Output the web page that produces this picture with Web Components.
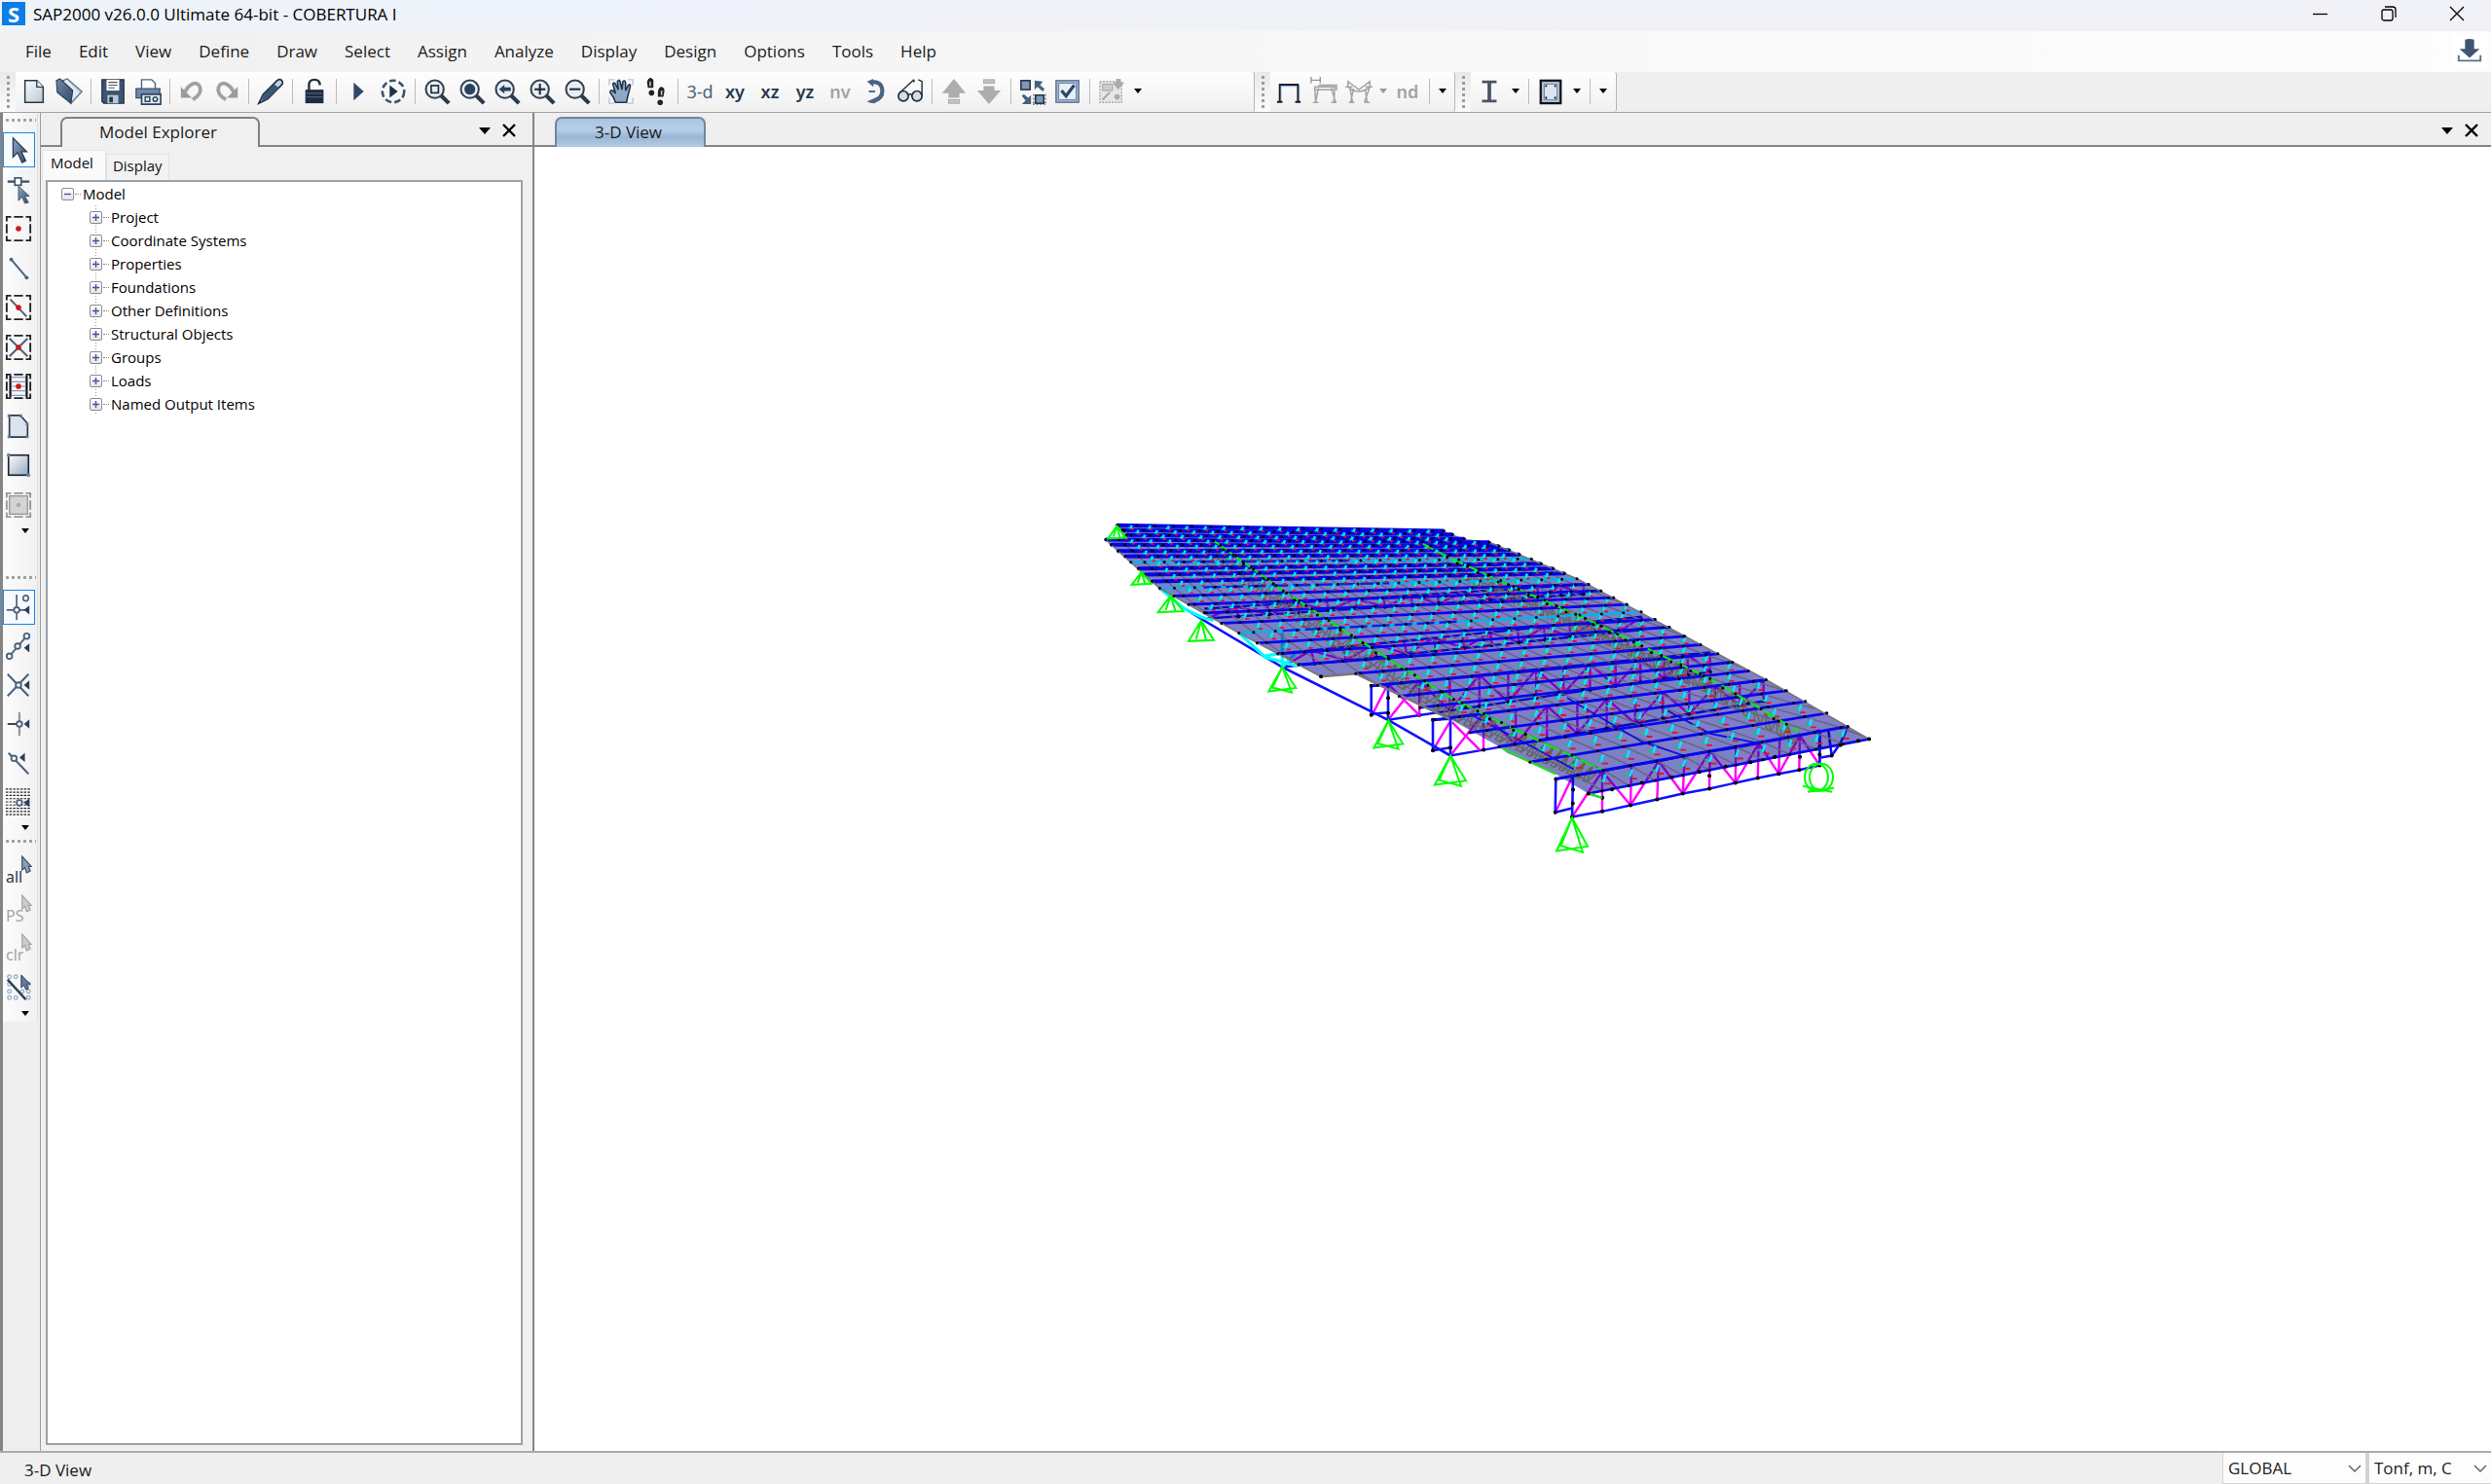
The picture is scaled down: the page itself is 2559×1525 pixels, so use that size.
<!DOCTYPE html>
<html lang="en">
<head>
<meta charset="utf-8">
<title>SAP2000 v26.0.0 Ultimate 64-bit - COBERTURA I</title>
<style>
  html, body { margin: 0; height: 100%; }
  body { font: 17px/24px "Open Sans", "Noto Sans", sans-serif; color: #1a1a1a; background: #efefef; overflow: hidden; }
</style>
</head>
<body>
<sap-window></sap-window>
<script>
const ICONS = {
  new: '<path d="M4 2H17L24 9V26H4Z" fill="url(#p)" stroke="#2d3845" stroke-width="1.6"/><path d="M17 2V9H24" fill="#eef3f6" stroke="#2d3845" stroke-width="1.4"/>',
  open: '<path d="M7 2L12 0L28 14L16 27L12 12Z" fill="#e4ebf3" stroke="#54708f" stroke-width="1.4"/><path d="M14 3L26 15" stroke="#9db2cb"/><path d="M0 2L4 0L18 13L16 27L1 15Z" fill="url(#b3)" stroke="#2b3d55" stroke-width="1.2"/>',
  save: '<path d="M2 1H26V27H4L2 25Z" fill="#3c546f" stroke="#223247" stroke-width="1.4"/><path d="M7 1H21V13H7Z" fill="#fff"/><path d="M9 4H19M9 7H19M9 10H16" stroke="#555" stroke-width="1.2"/><path d="M8 18H20V27H8Z" fill="#b9c7d8"/><path d="M10 20H14V26H10Z" fill="#26394f"/>',
  print: '<path d="M7 1H18L22 5V13H7Z" fill="#fff" stroke="#4a6483" stroke-width="1.5"/><path d="M1 11H27V21H1Z" fill="#6d88a8" stroke="#34506f" stroke-width="1.4"/><path d="M7 17H28V28H7Z" fill="#e6edf5" stroke="#2d4560" stroke-width="1.8"/><rect x="11" y="20" width="5" height="5" fill="none" stroke="#2d4560" stroke-width="1.6"/><circle cx="22" cy="22.500" r="2.400" fill="none" stroke="#2d4560" stroke-width="1.6"/>',
  undo: '<path d="M2 9V21H14Z" fill="#9a9a9a"/><path d="M6 16C10 6 20 1 23 9C25 15 20 20 15 23" fill="none" stroke="#a0a0a0" stroke-width="4"/>',
  redo: '<path d="M26 9V21H14Z" fill="#9a9a9a"/><path d="M22 16C18 6 8 1 5 9C3 15 8 20 13 23" fill="none" stroke="#a0a0a0" stroke-width="4"/>',
  pencil: '<path d="M1 27L6 17L21 2Q25 -1 27 3Q28 5 26 7L11 22Z" fill="#c5d0de" stroke="#1f2f44" stroke-width="1.8"/><path d="M6 18L18 6L23 10L11 22L4 25Z" fill="#3c5676"/>',
  lock: '<path d="M8 13V7Q8 1 14 1Q20 1 20 7" fill="none" stroke="#26303c" stroke-width="2.600"/><rect x="4" y="12" width="20" height="15" fill="#1c2b40"/><path d="M5 16H23M5 20H23" stroke="#46607f" stroke-width="1.500"/>',
  run: '<path d="M9 4L20 14L9 24Z" fill="#2f4966"/>',
  runall: '<circle cx="14" cy="14" r="12" fill="none" stroke="#3a516d" stroke-width="2.800" stroke-dasharray="7 3.400"/><path d="M10 7L19 14L10 21Z" fill="#1f3148"/>',
  zrect: 'Z<rect x="7.500" y="7.500" width="8" height="8" fill="none" stroke="#222f3f" stroke-width="1.800"/>',
  zfull: 'Z<circle cx="11.500" cy="11.500" r="6" fill="#2b405b"/>',
  zprev: 'Z<path d="M5 11.500L11 6.500V9.500H18V13.500H11V16.500Z" fill="#2b405b"/>',
  zin: 'Z<path d="M5.500 11.500H17.500M11.500 5.500V17.500" stroke="#1b2735" stroke-width="2.200"/>',
  zout: 'Z<path d="M5.500 11.500H17.500" stroke="#1b2735" stroke-width="2.200"/>',
  hand: '<path d="M1 7V1H7M21 1H27V7M27 21V27H21M7 27H1V21" fill="none" stroke="#b5c6dc" stroke-width="1.500"/><path d="M8 26Q6 20 2 15Q2 12 5 13L8 16L5 6Q6 3 8 6L11 12L10 3Q12 0 13 3L15 12L16 3Q18 1 19 4L19 13L22 7Q25 5 24 9L21 21L20 26Z" fill="#8fa8c7" stroke="#24354a" stroke-width="1.700"/>',
  feet: '<path d="M5 10L4 4Q5 -1 8 -1Q12 0 11 5L11 10Z" fill="#222"/><ellipse cx="9" cy="15.500" rx="3" ry="3" fill="#222"/><path d="M7.500 3V8" stroke="#ccc" stroke-width="1.600"/><path d="M16 20L16 14Q17 9 20 9Q24 10 23 15L22 20Z" fill="#222"/><ellipse cx="18.500" cy="26" rx="3" ry="3" fill="#222"/><path d="M20 13V18" stroke="#ccc" stroke-width="1.600"/>',
  rotate: '<path d="M10 4Q21 2 22 13Q22 22 13 24" fill="none" stroke="#4a6482" stroke-width="4.500"/><path d="M5 3L12 0V9Z" fill="#4a6482"/><path d="M17 20L5 25Q8 27 14 27Z" fill="#4a6482"/><path d="M7 14H14" stroke="#4a6482" stroke-width="2"/>',
  glasses: '<circle cx="6.500" cy="19" r="5.500" fill="#d4dce8" stroke="#232b36" stroke-width="1.800"/><circle cx="21.500" cy="19" r="5.500" fill="#d4dce8" stroke="#232b36" stroke-width="1.800"/><path d="M12 18Q14 16 16 18M3 15L17 2Q19 0 18 4M27 18V3L23 1" fill="none" stroke="#232b36" stroke-width="1.500"/>',
  up: '<path d="M14 0L27 16H20V21H8V16H1Z" fill="#adadad"/><rect x="8" y="23" width="12" height="4" fill="#c4c4c4" stroke="#a5a5a5"/>',
  down: '<path d="M14 28L27 13H20V8H8V13H1Z" fill="#adadad"/><rect x="8" y="1" width="12" height="4" fill="#c4c4c4" stroke="#a5a5a5"/>',
  swap: '<rect x="1" y="2" width="10" height="10" fill="#7f98b8" stroke="#1f2f44" stroke-width="1.600"/><rect x="17" y="18" width="9" height="9" fill="#7f98b8" stroke="#1f2f44" stroke-width="1.600"/><path d="M14 28H28M28 17V28M15 17V28" stroke="#1f2f44" stroke-dasharray="2 2"/><path d="M16 2V12L19 9L25 14L27 11L22 7L25 3ZM12 28V18L9 21L4 17L2 19L6 24L2 28Z" fill="#48617f"/>',
  check: '<rect x="1" y="2" width="25" height="24" fill="#9eb2cc" stroke="#5d7796" stroke-width="1.500"/><rect x="4" y="5" width="19" height="18" fill="#e9eff7" stroke="#6a83a2"/><path d="M7 13L12 19L21 7" fill="none" stroke="#2e4866" stroke-width="3.500"/>',
  script: '<rect x="1" y="3" width="24" height="23" fill="#e6e6e6" stroke="#a5a5a5" stroke-width="1.500" stroke-dasharray="2 1.500"/><path d="M4 6H15V13H4Z" fill="#ccc" stroke="#a0a0a0"/><path d="M15 4H28L21 12ZM19 0H24V5H19Z" fill="#aaa"/><path d="M4 23L12 15" stroke="#a0a0a0" stroke-width="2"/><circle cx="20" cy="20" r="3" fill="#aaa"/>',
  frame: '<path d="M5 26V8H25V26" fill="none" stroke="#9fc0ea" stroke-width="2"/><path d="M4 25V6.500H24V25M1 25.500H7M21 25.500H27" fill="none" stroke="#17202b" stroke-width="2"/>',
  frame2: '<path d="M0 -2V5M10 -2V5M0 1.500H10" stroke="#999" stroke-width="1.500"/><path d="M5 26L4 9H26L25 26M8 10L5 26M22 10L27 26M4 12H26M2 26H8M22 26H28M8 7H28V13" fill="none" stroke="#a3a3a3" stroke-width="1.600"/>',
  frame3: '<path d="M2 3L14 12L26 3V9Q14 19 2 9ZM4 9L7 26M8 11L5 26M21 11L23 26M26 9L20 26M3 26H9M20 26H26M-1 9H7M21 9H29" fill="none" stroke="#a3a3a3" stroke-width="1.600"/>',
  ibeam: '<path d="M6 3.500H22M6 24.500H22" stroke="#4a5564" stroke-width="3"/><path d="M14 3V25" stroke="#4a5564" stroke-width="4"/>',
  area: '<rect x="3" y="2" width="22" height="25" fill="#a8bcd6" stroke="#111" stroke-width="2.400"/><rect x="7" y="6" width="14" height="17" fill="#dde5ef" stroke="#7189a8"/><path d="M8 7h2v2h-2zM18 7h2v2h-2zM8 20h2v2h-2zM18 20h2v2h-2z" fill="#111"/>',
  pointer: '<path d="M8 1V22L13 17L18 28L22 26L17 16H23Z" fill="url(#b)" stroke="#2a3b52" stroke-width="1.400"/>',
  reshape: '<path d="M2 5H26" stroke="#40566f" stroke-width="2.600"/><rect x="10" y="1" width="7" height="8" fill="#fff" stroke="#40566f" stroke-width="1.800"/><path d="M14 10V26L18 22L21 29L25 28L21 21H26Z" fill="url(#b)" stroke="#40566f"/>',
  joint: 'D<circle cx="14" cy="14" r="3" fill="#d01818"/>',
  line: '<path d="M6 4L23 24" stroke="#4b627d" stroke-width="2.200"/><circle cx="6" cy="4" r="2" fill="#4b627d"/><circle cx="23" cy="24" r="2" fill="#4b627d"/>',
  qline: 'D<path d="M5 5L23 24" stroke="#4b627d" stroke-width="2.200"/><circle cx="14" cy="14" r="3" fill="#d01818"/>',
  brace: 'D<path d="M4 4L24 24M24 4L4 24" stroke="#4b627d" stroke-width="2.200"/><circle cx="14" cy="14" r="3" fill="#d01818"/>',
  beams: 'D<path d="M5 2V26M23 2V26" stroke="#111" stroke-width="2.400"/><path d="M6 4H22M6 9H22M6 14H22M6 19H22M6 24H22" stroke="#7e9cc2" stroke-width="1.200"/><circle cx="14" cy="14" r="3" fill="#d01818"/>',
  poly: '<path d="M4 2H16L24 11V26H4Z" fill="#dbe3ed" stroke="#2b3a4d" stroke-width="1.800"/><path d="M2 1h3v3h-3zM15 1h3v3h-3zM22 10h3v3h-3zM22 24h3v3h-3zM2 24h3v3h-3z" fill="#5b7aa3"/>',
  rect: '<rect x="3" y="3" width="22" height="22" fill="url(#b2)" stroke="#1f2733" stroke-width="1.800"/><circle cx="3" cy="3" r="2" fill="#6c86a8"/><circle cx="25" cy="25" r="2" fill="#6c86a8"/>',
  qarea: '<g opacity=".45">D</g><rect x="4" y="4" width="20" height="20" fill="#d4d4d4" stroke="#999" stroke-width="1.500"/><circle cx="14" cy="14" r="2.500" fill="#aaa"/>',
  s1: '<path d="M12 0V28M1 17H25" stroke="#4b627d" stroke-width="1.800"/><circle cx="12" cy="17" r="3" fill="#fff" stroke="#4b627d" stroke-width="2"/><circle cx="22" cy="4" r="3" fill="#fff" stroke="#4b627d" stroke-width="1.800"/>A17',
  s2: '<path d="M4 25L23 3" stroke="#4b627d" stroke-width="2"/><circle cx="4" cy="25" r="3" fill="#fff" stroke="#4b627d" stroke-width="2"/><circle cx="13" cy="14" r="3" fill="#fff" stroke="#4b627d" stroke-width="2"/><circle cx="23" cy="3" r="3" fill="#fff" stroke="#4b627d" stroke-width="2"/>A16',
  s3: '<path d="M2 2L25 26M25 2L2 26" stroke="#4b627d" stroke-width="2.200"/><circle cx="14" cy="14" r="3" fill="#fff" stroke="#4b627d" stroke-width="2"/>A14',
  s4: '<path d="M15 1V27" stroke="#999" stroke-width="2.400"/><path d="M2 14H14" stroke="#2c3e54" stroke-width="2"/><circle cx="15" cy="14" r="3" fill="#fff" stroke="#4b627d" stroke-width="2"/>A14',
  s5: '<path d="M3 3L25 26" stroke="#4b627d" stroke-width="2.200"/><circle cx="9" cy="9" r="3" fill="#fff" stroke="#4b627d" stroke-width="2"/><path d="M15 8L21 3V13Z" fill="#2c3e54"/>',
  s6: '<path d="M0 0H28M0 3.500H28M0 7H28M0 10.500H28M0 14H28M0 17.500H28M0 21H28M0 24.500H28M0 28H28" stroke="#222" stroke-width="1.300" stroke-dasharray="2.600 1.400"/><circle cx="15" cy="15" r="3" fill="#fff" stroke="#4b627d" stroke-width="2"/>A15',
  inter: '<g fill="none" stroke="#8fa9ca" stroke-width="1.300"><circle cx="4" cy="2" r="2"/><circle cx="11" cy="2" r="2"/><circle cx="4" cy="10" r="2"/><circle cx="25" cy="10" r="2"/><circle cx="4" cy="18" r="2"/><circle cx="4" cy="25" r="2"/><circle cx="11" cy="25" r="2"/><circle cx="18" cy="18" r="2"/><circle cx="25" cy="18" r="2"/><circle cx="25" cy="25" r="2"/></g><path d="M2 5L22 27" stroke="#2c3e54" stroke-width="2.600"/><path d="M17 0V14L20 11L22 16L25 15L23 10H27Z" fill="#5f7b9e" stroke="#2c3e54"/>',
  sel: '<path d="M18 -2V13L21 10L23 16L27 14L25 9H28Z" fill="#8ba2bf" stroke="#3c5068" stroke-width="1.300"/>',
  seloff: '<path d="M18 -2V13L21 10L23 16L27 14L25 9H28Z" fill="#ccc" stroke="#a5a5a5" stroke-width="1.300"/>',
  update: '<path d="M9 1Q14 -1 19 1V11H25L14 21L3 11H9Z" fill="#40566f"/><path d="M2 18V24H26V18" fill="none" stroke="#5a7088" stroke-width="2"/>'
};
const ZOOM = '<path d="M18 18L27 27" stroke="#2b3a4d" stroke-width="4.500"/><circle cx="11.500" cy="11.500" r="9.800" fill="#e9eef4" stroke="#34404f" stroke-width="2.200"/>';
const DASH = '<path d="M1 6V1H6M9 1H19M22 1H27V6M27 9V19M27 22V27H22M19 27H9M6 27H1V22M1 19V9" fill="none" stroke="#222" stroke-width="2"/>';
const DEFS = '<defs><linearGradient id="p" x2="1" y2="1"><stop offset="0" stop-color="#fbfdfd"/><stop offset="1" stop-color="#b9c7cf"/></linearGradient><linearGradient id="b" x2="1" y2="1"><stop offset="0" stop-color="#8fa8c7"/><stop offset="1" stop-color="#33496a"/></linearGradient><linearGradient id="b3" x2="1" y2="1"><stop offset="0" stop-color="#7089a8"/><stop offset="1" stop-color="#33496a"/></linearGradient><linearGradient id="b2" x2="1" y2="1"><stop offset="0" stop-color="#fff"/><stop offset="1" stop-color="#93a8c2"/></linearGradient></defs>';
function icon(name) {
  const body = ICONS[name].replace(/^Z/, ZOOM).replace(/^D|(?<=>)D(?=<)/, DASH)
    .replace(/A(\d+)$/, (m, y) => `<path d="M20 ${y}L26 ${y - 5}V${+y + 5}Z" fill="#2c3e54"/>`);
  return `<svg viewBox="-1 -1 30 30" width="28" height="28" aria-hidden="true">${DEFS}${body}</svg>`;
}
function define(name, html, setup) {
  customElements.define(name, class extends HTMLElement {
    connectedCallback() {
      if (this.shadowRoot) return;
      const root = this.attachShadow({ mode: "open" });
      root.innerHTML = typeof html === "function" ? html(this) : html;
      if (setup) setup(root, this);
    }
  });
}

/* ---------- small controls ---------- */
define("tool-button", el => `<style>
  :host { display: flex; flex: none; width: 36px; height: 36px; }
  :host([rail]) { width: 33px; height: auto; flex: 1; align-items: center; }
  button { flex: 1; min-width: 0; height: 36px; padding: 0; border: 0; background: none; display: flex; align-items: center; justify-content: center; font: 600 18px/24px "Noto Sans", "Open Sans", sans-serif; color: #26394f; }
  svg { flex: none; width: 28px; height: 28px; overflow: visible; }
  :host([rail]) button { justify-content: start; padding-left: 2px; }
  :host([light]) button { font-weight: 400; color: #4d5f78; }
  :host([off]) button { color: #a3a3a3; }
  :host([on]) button { padding-left: 1px; border: 1px solid #1c86dc; background: #f8fbfe; }
  :host([tagged]) button { display: grid; justify-content: start; align-content: center; font-weight: 400; font-size: 16px; }
  :host([tagged]) svg { grid-area: 1 / 1; }
  :host([tagged]) span { grid-area: 1 / 1; align-self: end; justify-self: start; padding-left: 1px; line-height: 16px; }
  :host([white]) button { background: #fff; }
</style><button type="button" aria-label="${el.getAttribute("name") || el.getAttribute("icon") || "tool"}">${el.hasAttribute("icon") ? icon(el.getAttribute("icon")) : ""}<span><slot></slot></span></button>`,
  root => { const s = root.querySelector("span"); if (!root.host.textContent.trim()) s.style.display = "none"; });

define("drop-arrow", `<style>
  :host { display: flex; flex: none; width: 18px; height: 36px; }
  button { flex: 1; padding: 0; border: 0; background: none; display: flex; align-items: center; justify-content: center; color: #000; }
  :host([off]) { width: 14px; }
  :host([off]) button { color: #999; }
  :host([rail]) { width: 33px; height: 12px; }
  :host([rail]) button { justify-content: end; padding-right: 6px; }
</style><button type="button" aria-label="More"><svg width="8" height="5" viewBox="0 0 8 5"><path d="M0 0H8L4 5Z" fill="currentColor"/></svg></button>`);

define("tool-sep", `<style>:host { display: block; flex: none; width: 1px; height: 26px; margin: 0 4px; background: #bcbcbc; }</style>`);

define("tool-strip", `<style>
  :host { display: flex; align-items: center; height: 41px; box-sizing: border-box; padding-bottom: 2px; border-right: 1px solid #b5b5b5; border-radius: 0 3px 3px 0; background: linear-gradient(#fefefe, #f0f0f0); }
  i { flex: none; height: 41px; width: 16px; margin: 0 1px -2px 0; background: linear-gradient(#e9e9e9, #fbfbfb); display: flex; align-items: center; justify-content: center; }
  i::before { content: ""; width: 3px; height: 33px; background: repeating-linear-gradient(#9d9d9d 0 3px, transparent 3px 6px); }
</style><i></i><slot></slot>`);

/* ---------- title and menu ---------- */
define("title-bar", `<style>
  :host { display: flex; align-items: center; height: 32px; background: linear-gradient(90deg, #edf3f8, #eff3fc 25%, #f1f2f8 40%); color: #000; }
  b { width: 24px; height: 24px; margin: 0 8px 4px 2px; background: #0a7de8; color: #fff; font: 700 22px/24px "Open Sans", sans-serif; text-align: center; }
  h1 { flex: 1; margin: 0 0 2px; font: inherit; }
  button { width: 70px; height: 32px; padding: 0 0 5px; border: 0; background: none; }
  svg { display: block; margin: auto; fill: none; stroke: #000; stroke-width: 1.3; }
</style><b>S</b><h1>SAP2000 v26.0.0 Ultimate 64-bit - COBERTURA I</h1>
<button type="button" aria-label="Minimize"><svg width="16" height="16"><path d="M0 8.500H15"/></svg></button>
<button type="button" aria-label="Restore"><svg width="16" height="16"><rect x="1" y="4" width="11" height="11" rx="2"/><path d="M4 1H12Q15 1 15 4V12"/></svg></button>
<button type="button" aria-label="Close"><svg width="16" height="16"><path d="M1 1L15 15M15 1L1 15"/></svg></button>`);

define("menu-bar", `<style>
  :host { display: flex; align-items: center; height: 42px; padding: 0 4px 0 12px; background: linear-gradient(90deg, #f0f0f0, #f7f7f7 50%, #fdfdfd); }
  nav { display: flex; flex: 1; }
  a { padding: 0 14px; color: #1b1b1b; text-decoration: none; }
</style><nav>${["File", "Edit", "View", "Define", "Draw", "Select", "Assign", "Analyze", "Display", "Design", "Options", "Tools", "Help"].map(t => `<a href="#">${t}</a>`).join("")}</nav><tool-button icon="update" white></tool-button>`);

const t = (n, a = "") => `<tool-button icon="${n}" ${a}></tool-button>`, sep = "<tool-sep></tool-sep>", arrow = "<drop-arrow></drop-arrow>";
define("tool-bars", `<style>
  :host { display: flex; height: 41px; background: #efefef; border-bottom: 1px solid #a3a3a3; }
  .main { width: 1289px; }
  .main, .draw, .section { flex: none; }
  .draw { width: 206px; }
  .section { width: 166px; }
</style>
<tool-strip class="main">${t("new")}${t("open")}${sep}${t("save")}${t("print")}${sep}${t("undo")}${t("redo")}${sep}${t("pencil")}${sep}${t("lock")}${sep}${t("run")}${t("runall")}${sep}${t("zrect")}${t("zfull")}${t("zprev")}${t("zin")}${t("zout")}${sep}${t("hand")}${t("feet")}${sep}<tool-button light>3-d</tool-button><tool-button>xy</tool-button><tool-button>xz</tool-button><tool-button>yz</tool-button><tool-button off>nv</tool-button>${t("rotate")}${t("glasses")}${sep}${t("up")}${t("down")}${sep}${t("swap")}${t("check")}${sep}${t("script")}${arrow}</tool-strip>
<tool-strip class="draw">${t("frame")}${t("frame2")}${t("frame3")}<drop-arrow off></drop-arrow><tool-button off>nd</tool-button>${sep}${arrow}</tool-strip>
<tool-strip class="section">${t("ibeam")}${arrow}${sep}${t("area")}${arrow}${sep}${arrow}</tool-strip>`);

/* ---------- left rail ---------- */
define("tool-rail", `<style>
  :host { display: block; width: 41px; box-sizing: border-box; border-left: 3px solid #848484; background: #efefef; }
  section { display: flex; flex-direction: column; width: 35px; background: linear-gradient(90deg, #fcfcfc, #f1f1f1); border-right: 1px solid #ddd; }
  section::before { content: ""; flex: none; height: 3px; margin: 6px 1px 9px 3px; background: repeating-linear-gradient(90deg, #a2a2a2 0 3px, transparent 3px 6px); }
  div { display: flex; flex-direction: column; flex: none; }
  .draw { height: 470px; }
  .draw div { height: 405px; }
  .snap { height: 271px; }
  .snap div { height: 240px; }
  .pick { height: 193px; }
  .pick div { height: 160px; }
</style>
<section class="draw"><div>${t("pointer", "rail on")}${["reshape", "joint", "line", "qline", "brace", "beams", "poly", "rect", "qarea"].map(n => t(n, "rail")).join("")}</div><drop-arrow rail></drop-arrow></section>
<section class="snap"><div>${t("s1", "rail on")}${["s2", "s3", "s4", "s5", "s6"].map(n => t(n, "rail")).join("")}</div><drop-arrow rail></drop-arrow></section>
<section class="pick"><div><tool-button rail tagged icon="sel">all</tool-button><tool-button rail tagged off icon="seloff">PS</tool-button><tool-button rail tagged off icon="seloff">clr</tool-button>${t("inter", "rail")}</div><drop-arrow rail></drop-arrow></section>`);

/* ---------- dockable pane with a caption tab ---------- */
define("dock-pane", el => `<style>
  :host { display: flex; flex-direction: column; min-width: 0; background: #f0f0f0; }
  header { display: flex; align-items: flex-end; height: 35px; box-sizing: border-box; padding-right: 12px; border-bottom: 2px solid #858585; background: #efefef; }
  h2 { box-sizing: border-box; height: 31px; margin: 0 auto -2px 20px; padding-right: 4px; width: 205px; border: 2px solid #808080; border-bottom: 0; border-radius: 7px 7px 0 0; background: #f0f0f0; font: inherit; line-height: 27px; text-align: center; }
  :host([active]) h2 { width: 155px; margin-left: 21px; background: linear-gradient(#aac3e0, #b6cfe9 40%, #9ab6d3 65%, #b2cbe6); border-color: #71859c; }
  :host([active]) header { padding-right: 8px; }
  button { width: 25px; height: 30px; padding: 0; border: 0; background: none; }
  svg { display: block; margin: auto; }
</style>
<header><h2>${el.getAttribute("caption")}</h2>
<button type="button" aria-label="Window position"><svg width="12" height="7"><path d="M0 0H12L6 7Z"/></svg></button>
<button type="button" aria-label="Close pane"><svg width="14" height="14"><path d="M1 1L13 13M13 1L1 13" stroke="#000" stroke-width="2.400"/></svg></button></header><slot></slot>`);

define("tree-node", el => `<style>
  :host { display: flex; align-items: center; height: 24px; font-size: 15px; color: #000; padding-left: 43px; background: repeating-linear-gradient(#999 0 1px, transparent 1px 3px) 49px 0 / 1px 100% no-repeat; }
  :host([top]) { padding-left: 14px; background: none; }
  button { width: 13px; height: 13px; padding: 0; border: 1px solid #8c8c8c; border-radius: 2px; background: linear-gradient(#fff, #e6e6e6); }
  svg { display: block; }
  i { width: 6px; margin: 0 2px 0 1px; border-top: 1px dotted #888; }
</style><button type="button" aria-label="Toggle"><svg width="11" height="11"><path d="M2 5.500H9${el.hasAttribute("top") ? "" : "M5.500 2V9"}" stroke="#3a56a5" stroke-width="1.400"/></svg></button><i></i><slot></slot>`);

define("model-explorer", `<style>
  :host { display: flex; flex-direction: column; flex: 1; padding: 2px 10px 6px 5px; }
  nav { display: flex; align-items: flex-end; height: 32px; margin-left: -4px; }
  nav button { font: inherit; font-size: 15px; height: 27px; padding: 0 6px 4px; border: 1px solid #e2e2e2; border-bottom: 0; background: #f2f2f2; color: #111; line-height: 22px; }
  nav button:first-child { height: 31px; padding: 0 12px 7px 8px; background: #fafafa; }
  div { flex: 1; border: 2px solid #9aa1ab; background: #fff; }
</style><nav><button type="button">Model</button><button type="button">Display</button></nav>
<div><tree-node top>Model</tree-node>${["Project", "Coordinate Systems", "Properties", "Foundations", "Other Definitions", "Structural Objects", "Groups", "Loads", "Named Output Items"].map(n => `<tree-node>${n}</tree-node>`).join("")}</div>`);

/* ---------- structural model ---------- */
function modelDrawing() {
  const a = (x, y) => [1100 + x / 3, 500 + y / 3], b = (x, y) => [1500 + x / 3, 500 + y / 3];
  const left = [a(142,118),a(158,133),a(172,148),a(107,162),a(124,178),a(145,197),a(167,214),a(185,232),a(208,251),a(228,270),a(250,291),a(274,312),a(318,336),a(363,362),a(412,388),a(464,420),a(518,450),a(574,481),a(638,514),a(702,547),a(878,575),a(926,613),a(1012,645),a(1076,680),a(1116,718),a(1230,757),a(1320,800),a(1415,848),b(295,900),b(395,945)];
  const right = [a(1150,135),a(1177,146),a(1213,160),b(90,170),b(120,182),b(152,194),b(183,208),b(220,222),b(250,236),b(287,251),b(322,266),b(360,283),b(396,300),b(434,320),b(473,341),b(514,362),b(558,385),b(601,408),b(645,432),b(692,460),b(741,486),b(794,514),b(839,540),b(888,567),b(943,594),b(1003,628),b(1064,661),b(1130,697),b(1195,738),b(1260,777)];
  const g1 = [a(330,95),a(440,165),a(655,320),a(900,480),a(1180,655),a(1438,780),b(435,870),b(520,905)];
  const g2 = [a(1085,175),a(1160,215),b(180,315),b(385,405),b(560,490),b(770,590),b(1045,755)];
  const P = p => p.map(n => n.toFixed(1)).join(" ");
  const path = pts => "M" + pts.map(P).join("L");
  const at = (i, x) => { const [l, r] = [left[i], right[i]]; return [x, l[1] + (r[1] - l[1]) * (x - l[0]) / (r[0] - l[0])]; };
  const cross = i => {
    for (let k = 0; k < g1.length - 1; k++) for (let s = 0; s <= 1; s += .02) {
      const x = g1[k][0] + (g1[k+1][0] - g1[k][0]) * s, y = g1[k][1] + (g1[k+1][1] - g1[k][1]) * s;
      if (y >= at(i, x)[1]) return x;
    }
    return g1[g1.length - 1][0];
  };
  const gx = left.map((_, i) => cross(i));
  const node = (i, k) => { const y = at(i, gx[i])[1]; return at(i, gx[i] + k * (19 + 8 * (y - 540) / 250)); };
  const inside = (i, p) => p[0] >= left[i][0] - 1 && p[0] <= right[i][0] + 1;
  const outline = path([a(142,118), a(1150,135), a(1213,160), b(90,170), b(360,283), b(692,460), b(943,594), b(1260,777), b(395,945), b(295,885), b(145,820), a(1320,800), a(1168,715), a(1012,640), a(878,575), a(771,584), a(518,450), a(274,312), a(107,162), a(165,160)]) + "Z";
  const L = (d, c, w = 2, x = "") => `<path d="${d}" fill="none" stroke="${c}" stroke-width="${w}" ${x}/>`;
  const N = (pts, w = 4) => `<path d="${pts.map(p => `M${P(p)}h.1`).join("")}" stroke="#000" stroke-width="${w}" stroke-linecap="round"/>`;
  let under = "", over = "", dots = [];

  /* transverse trusses: chord below each main row */
  const truss = (bot, top) => {
    let web = "";
    bot.forEach((p, i) => { if (i) web += path([p, top[i]]); if (i) web += i % 2 ? path([bot[i-1], top[i]]) : path([top[i-1], p]); });
    return L(web, "#f0f", 2.4) + L(path(bot), "#11f", 2.4) + L(path(top), "#11f", 2.4) + N(bot.slice(1));
  };
  const fb = [b(345,1017),b(438,1000),b(525,981),b(607,963),b(686,945),b(768,930),b(848,912),b(917,897),b(982,884),b(1045,872),b(1108,858)];
  const ft = [b(348,890),b(438,876),b(528,858),b(612,845),b(692,828),b(770,815),b(850,803),b(920,790),b(985,778),b(1047,766),b(1110,750)];
  const make = (p, q, r, s, n) => { const f = (m, o, j) => { const z = j / n, w = z * (1 + .18 * (1 - z)); return [m[0] + (o[0] - m[0]) * w, m[1] + (o[1] - m[1]) * w]; }; const B = [], T = []; for (let j = 0; j <= n; j++) { B.push(f(p, q, j)); T.push(f(r, s, j)); } return truss(B, T); };
  under += make(a(420,405), b(380,330), a(412,375), b(380,300), 14);
  under += make(a(652,555), b(560,440), a(640,514), b(560,400), 13);
  under += make(a(978,718), b(770,570), a(978,607), b(770,510), 12);
  under += make(a(1170,828), b(935,660), a(1170,710), b(935,596), 11);
  under += truss(fb, ft);
  under += L(path([a(978,607), a(930,700)]) + path([a(978,607), a(1077,706)]) + path([a(1168,725), a(1118,808)]) + path([a(1175,725), a(1262,812)]) + path([b(345,895), b(295,1000)]), "#f0f", 2.4);
  under += L(path([a(360,380), a(400,405), a(652,555), a(978,718), a(1170,828)]) + path([a(978,607), a(926,613), a(926,700), a(978,695)]) + path([a(978,607), a(978,718)]) + path([a(1168,715), a(1116,718), a(1116,812), a(1170,803)]) + path([a(1170,715), a(1170,828)]) + path([b(348,890), b(295,900), b(293,1003), b(345,990)]) + path([b(348,890), b(345,1017)]) + path([b(1108,750), b(1108,858)]) + path([b(1108,835), b(1145,828), b(1172,790), b(1195,738)]) + path([b(1145,828), b(1135,750)]), "#11f", 2.6);
  under += L(path([a(274,312), a(350,375), a(400,400), a(440,412)]) + path([a(518,450), a(600,525), a(700,552)]) + path([a(600,520), a(640,514)]) + path([a(652,555), a(690,515)]) + path([a(652,555), a(652,450)]), "#0ff", 3.2);
  under += N([a(926,613), a(926,703), a(978,650), a(978,697), a(1116,718), a(1116,812), a(1170,803), b(295,900), b(293,1003), b(348,933), b(347,975), b(345,1017), b(438,958), b(768,890), b(1047,832), b(1108,800), b(1108,825), b(1145,828), b(1172,795)]);
  /* longitudinal bracing beside the ridge lines */
  const brace = (g, dx, dy) => {
    let d = "";
    for (let k = 1; k < g.length - 1; k++) for (let j = 0; j < 8; j++) {
      const m = s => [g[k][0] + (g[k+1][0] - g[k][0]) * s, g[k][1] + (g[k+1][1] - g[k][1]) * s];
      const p = m(j / 8), q = m((j + 1) / 8), h = [(p[0] + q[0]) / 2 + dx, (p[1] + q[1]) / 2 + dy];
      d += path([p, h, q]) + path([p, [p[0] + dx, p[1] + dy], h]);
    }
    return L(d, "#cccc00", 1.4);
  };
  under += `<g clip-path="url(#sheet)">` + brace(g1.slice(0, 7), -11, 15) + brace(g2, 0, 16) + `</g>`;

  let rows = "", backRows = "", cols = "", cyan = "", red = "", green = "", cyanRows = "", dark = "";
  for (let i = 0; i < left.length; i++) {
    const seg = path([left[i], right[i]]);
    if ([7, 11, 16].includes(i)) { const m = at(i, left[i][0] + (right[i][0] - left[i][0]) * .55); cyanRows += seg; dark += path([at(i, left[i][0] + 45), m]); }
    else if (i < 12) backRows += seg; else rows += seg;
    dots.push(left[i], right[i]);
    for (let k = -8; k < 24; k++) {
      const p = node(i, k);
      if (inside(i, p)) dots.push(p);
      if (i < left.length - 1) {
        const q = node(i + 1, k), r = node(i, k + 1), s = node(i + 1, k + 1);
        cols += path([p, q]);
        const c = [(p[0] + q[0] + r[0] + s[0]) / 4, (p[1] + q[1] + r[1] + s[1]) / 4];
        if (c[0] > left[i+1][0] + 5 && c[0] < right[i][0] - 1) {
          const z = .55 + (c[1] - 545) / 350;
          cyan += `M${P([c[0] + 2 * z, c[1] - 5 * z])}l${(-2 * z).toFixed(1)} ${(6 * z).toFixed(1)}`;
          green += `M${P([c[0] - 4 * z, c[1] - z])}l${(4 * z).toFixed(1)} ${(2 * z).toFixed(1)}`;
          red += `M${P([c[0] + z, c[1] + 2.500 * z])}h${(5 * z).toFixed(1)}`;
        }
      }
    }
  }
  over += `<g clip-path="url(#sheet)">` + L(cols, "#66667c", 1.5) + `</g>`;
  over += L(backRows, "#0606e2", 4) + L(rows, "#0808ea", 2.8) + L(cyanRows, "#00b4e8", 2.4) + L(dark, "#0a20e0", 2.4, 'stroke-dasharray="18 5"');
  over += L(path([b(330,650), b(560,785), b(690,828)]) + path([b(30,700), b(240,810), b(350,870)]) + path([b(640,690), b(770,760), b(920,790)]), "#0c0ce6", 1.8);
  over += L(green, "#00cc70", 1.8) + L(red, "#e01030", 1.8) + L(cyan, "#00e8ff", 2.6);
  over += L(path([a(771,584), a(878,575), a(1012,640), a(1168,715)]), "#77777a", 2.4);
  over += L(path([a(107,162), a(274,312), a(518,450), a(771,584)]) + path([b(90,170), b(360,283), b(692,460), b(943,594), b(1260,777)]), "#77777a", 1.6);
  over += L(path(g1.slice(1, 7)), "#0e1", 2, 'stroke-dasharray="16 4"') + L(path(g2), "#0e1", 2, 'stroke-dasharray="12 5"') + L(path([a(1330,805), a(1400,840), b(295,885)]) + path([b(395,945), b(438,958)]), "#2d2", 2.4);
  over += `<path d="${dots.map(p => `M${P(p)}h.1`).join("")}" stroke="#00001c" stroke-width="3" stroke-linecap="round"/>`;
  const ridge = g => { let o = []; for (let k = 0; k < g.length - 1; k++) for (let j = 0; j < 7; j++) o.push([g[k][0] + (g[k+1][0] - g[k][0]) * j / 7, g[k][1] + (g[k+1][1] - g[k][1]) * j / 7 + (j % 2) * 2]); return o; };
  over += N(ridge(g1.slice(1, 6)), 3) + N(ridge(g2.slice(1)), 3) + N([a(771,584), b(395,945), b(1260,777), b(468,932), b(560,912), b(652,895), b(737,878), b(818,862), b(895,848), b(970,832), b(1172,795), b(1227,782)]);

  /* supports */
  const sup = ([x, y], w, h) => `M${x} ${y}l${-w} ${h}l${2*w} -1zM${x} ${y}l${-w*.4} ${h - 2}M${x} ${y}l${w*.4} ${h}`;
  const sup2 = ([x, y], w, h) => `M${x} ${y}l${-w} ${h}l${2*w} ${-h*.14}zM${x} ${y}l${-w*.72} ${h*.84}l${w*1.400} ${h*.2}z`;
  const sups = sup(a(142,120), 9, 13) + sup(a(218,262), 10, 13) + sup(a(308,335), 13, 17) + sup(a(402,412), 13, 21) + sup2(a(652,555), 14, 25) + sup2(a(979,720), 15, 28) + sup2(a(1170,828), 16, 30) + sup2(b(345,1020), 16, 34);
  const [cx, cy] = b(1104,895);
  const roller = `<g fill="none" stroke="#0f0" stroke-width="2"><ellipse cx="${cx - 2}" cy="${cy}" rx="12" ry="14"/><ellipse cx="${cx + 3}" cy="${cy}" rx="12" ry="14"/><path d="M${cx - 16} ${cy + 9}L${cx + 14} ${cy + 15}M${cx - 11} ${cy + 15}L${cx + 16} ${cy + 11}"/></g>`;
  return `<svg viewBox="549 151 2010 1339" role="img" aria-label="3-D model of the roof structure"><defs><clipPath id="sheet"><path d="${outline}"/></clipPath></defs>${under}<path d="${outline}" fill="#000090" fill-opacity=".5"/>${over}${L(sups, "#0f0", 2)}${roller}</svg>`;
}
define("model-view", () => `<style>
  :host { display: block; flex: 1; min-height: 0; background: #fff; }
  svg { display: block; width: 100%; height: 100%; }
</style>${modelDrawing()}`);

define("status-bar", `<style>
  :host { display: flex; align-items: center; height: 34px; box-sizing: border-box; border-top: 2px solid #ababab; background: #efefef; }
  output { flex: 1; padding: 4px 0 0 25px; }
  label { display: flex; align-items: center; width: 150px; height: 32px; box-sizing: border-box; border: 1px solid #d2d2d2; border-width: 0 3px 1px 1px; background: #fdfdfd; }
  label + label { width: 126px; border-right: 0; }
  select { appearance: none; flex: 1; min-width: 0; height: 30px; padding: 0 0 0 5px; border: 0; background: none; font: inherit; color: #222; }
  svg { flex: none; margin-right: 4px; }
</style><output>3-D View</output>
<label aria-label="Coordinate system"><select><option>GLOBAL</option></select><svg width="14" height="8"><path d="M1 1L7 7L13 1" fill="none" stroke="#666" stroke-width="1.500"/></svg></label>
<label aria-label="Units"><select><option>Tonf, m, C</option></select><svg width="14" height="8"><path d="M1 1L7 7L13 1" fill="none" stroke="#666" stroke-width="1.500"/></svg></label>`);

define("sap-window", `<style>
  :host { display: flex; flex-direction: column; height: 100vh; }
  main { flex: 1; display: flex; min-height: 0; }
  .explorer { flex: none; width: 508px; box-sizing: border-box; border-left: 1px solid #9d9d9d; border-right: 2px solid #858585; }
  .view { flex: 1; }
</style>
<title-bar></title-bar><menu-bar></menu-bar><tool-bars></tool-bars>
<main><tool-rail></tool-rail>
<dock-pane class="explorer" caption="Model Explorer"><model-explorer></model-explorer></dock-pane>
<dock-pane class="view" caption="3-D View" active><model-view></model-view></dock-pane></main>
<status-bar></status-bar>`);
</script>
</body>
</html>
